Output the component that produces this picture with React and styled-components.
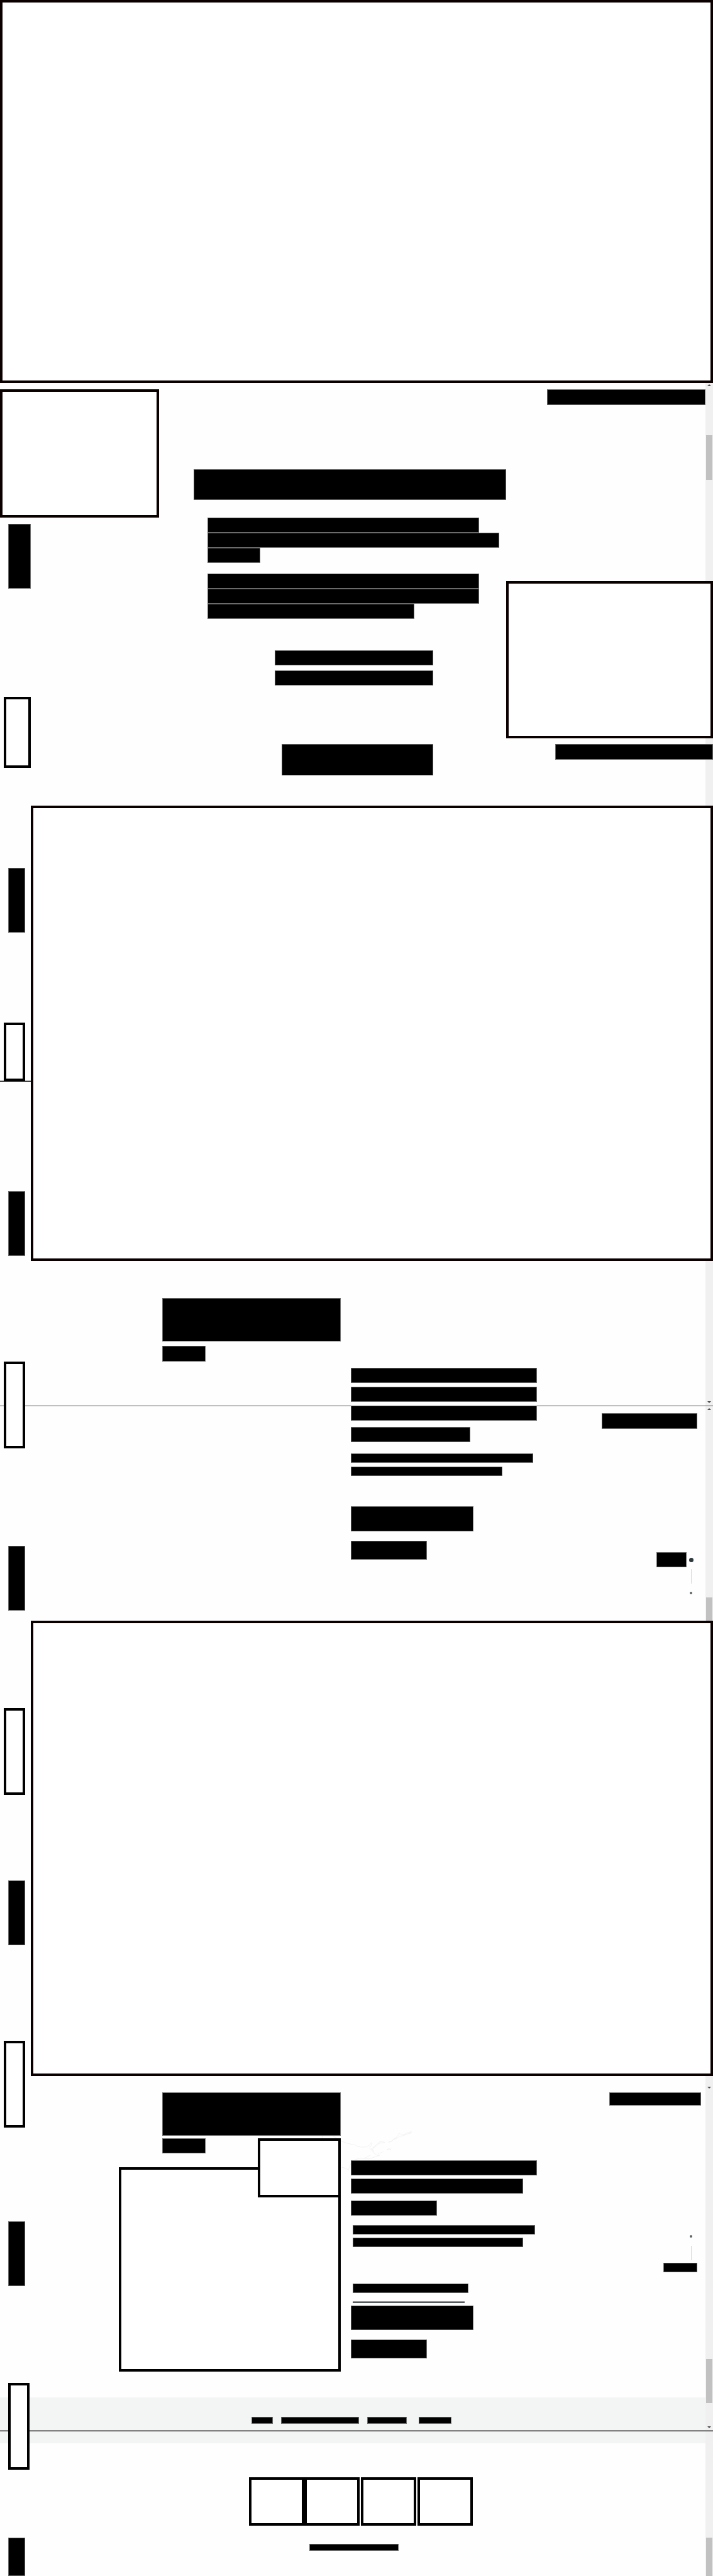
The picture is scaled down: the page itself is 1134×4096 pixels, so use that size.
import React from 'react';
import styled, { createGlobalStyle, css } from 'styled-components';

const GlobalStyle = createGlobalStyle`
  *, *::before, *::after { box-sizing: border-box; }
  html, body { margin: 0; padding: 0; background: #fefefe; }
  body { font-family: "Liberation Sans", Arial, sans-serif; }
`;

const solid = css`
  display: block;
  flex: none;
  margin: 0;
  padding: 0;
  background: #000;
  border: 1px solid #6b6b6b;
`;

const space = css`
  margin-top: ${(p) => p.$gap || 0}px;
`;

const Page = styled.div`
  position: relative;
  overflow: hidden;
`;

/* Scrollbar strip down the right edge, under the page content */
const Track = styled.div`
  position: absolute;
  top: 0;
  right: 0;
  bottom: 0;
  width: 12px;
  background: #f0f0f0;
`;

const Thumb = styled.div`
  position: absolute;
  top: ${(p) => p.$top}px;
  left: 1px;
  right: 1px;
  height: ${(p) => p.$size}px;
  background: #c1c1c1;
`;

const Arrow = styled.div`
  position: absolute;
  top: ${(p) => p.$top}px;
  left: 3px;
  border-left: 3px solid transparent;
  border-right: 3px solid transparent;
  ${(p) => (p.$up ? 'border-bottom' : 'border-top')}: 3px solid #4f4f4f;
`;

const Rule = styled.hr`
  position: absolute;
  top: ${(p) => p.$top}px;
  left: 0;
  right: 0;
  height: ${(p) => (p.$heavy ? 2 : 1)}px;
  margin: 0;
  border: 0;
  background: #444;
  ${(p) => p.$heavy && 'background: #222; border-top: 1px solid #929292;'}
`;

const Content = styled.div`
  position: relative;
`;

/* Positioned so that the page-wide rules pass behind it */
const Panel = styled.div`
  position: relative;
  height: ${(p) => p.$size}px;
  background: #fff;
  border: 4px solid #0b0000;
`;

const Header = styled.header`
  display: flex;
  align-items: flex-start;
  height: 214px;
  padding-top: 10px;
  padding-right: 12px;
`;

const Logo = styled.div`
  flex: none;
  width: 253px;
  height: 204px;
  background: #fff;
  border: 4px solid #0b0000;
`;

const PageTitle = styled.div`
  ${solid}
  width: 497px;
  height: 49px;
  margin: 127px 0 0 55px;
`;

const Tag = styled.div`
  ${solid}
  ${space}
  width: ${(p) => p.$width}px;
  height: ${(p) => p.$size || 25}px;
  margin-left: auto;
  margin-right: ${(p) => p.$inset || 0}px;
`;

const Body = styled.div`
  display: flex;
`;

const Rail = styled.aside`
  position: relative;
  z-index: 1;
  flex: none;
  display: flex;
  flex-direction: column;
  width: 49px;
  padding-top: 10px;
`;

const RailBar = styled.div`
  ${solid}
  ${space}
  width: ${(p) => p.$width || 27}px;
  height: ${(p) => p.$size || 103}px;
  margin-left: 13px;
`;

const RailBox = styled.div`
  ${space}
  flex: none;
  width: ${(p) => p.$width || 34}px;
  height: ${(p) => p.$size || 138}px;
  margin-left: ${(p) => p.$left || 6}px;
  background: #fff;
  border: 4px solid #000;
`;

const Main = styled.main`
  flex: 1;
  min-width: 0;
`;

const Intro = styled.section`
  display: flex;
  height: 458px;
`;

const IntroCopy = styled.div`
  display: flex;
  flex-direction: column;
  width: 475px;
  margin-left: 281px;
`;

const Line = styled.div`
  ${solid}
  ${space}
  width: ${(p) => p.$width}px;
  height: ${(p) => p.$size || 24}px;
  margin-left: ${(p) => p.$indent || 0}px;
`;

const Action = styled.button`
  ${solid}
  ${space}
  width: ${(p) => p.$width}px;
  height: ${(p) => p.$size}px;
  margin-left: ${(p) => p.$indent || 0}px;
  border-radius: 0;
`;

const IntroAside = styled.div`
  flex: 1;
  padding-top: 101px;
`;

const Figure = styled.div`
  height: 250px;
  background: #fff;
  border: 4px solid #0b0000;
`;

const Section = styled.section`
  position: relative;
  display: grid;
  grid-template-columns: 284px 296px 1fr;
  column-gap: 16px;
  align-items: start;
  height: ${(p) => p.$size}px;
  padding-left: 209px;
`;

const Column = styled.div`
  position: relative;
  display: flex;
  flex-direction: column;
  padding-top: ${(p) => p.$top}px;
`;

const Picture = styled.div`
  width: 353px;
  height: 325px;
  margin: 22px 0 0 -69px;
  background: #fff;
  border: 4px solid #000;
`;

const Inset = styled.div`
  position: absolute;
  top: 99px;
  right: 0;
  width: 132px;
  height: 94px;
  background: #fff;
  border: 4px solid #000;
`;

const Underline = styled.div`
  width: 178px;
  height: 3px;
  margin: 13px 0 4px 3px;
  background: #555a5c;
  border-top: 1px solid #999;
`;

const Coast = styled.svg`
  position: absolute;
  top: 70px;
  left: 439px;
  width: 189px;
  height: 95px;
`;

const Step = styled.div`
  ${space}
  display: flex;
  align-items: center;
  justify-content: flex-end;
  gap: 4px;
  padding-right: 31px;
`;

const StepLabel = styled.div`
  ${solid}
  width: 48px;
  height: 24px;
`;

const Dot = styled.span`
  width: ${(p) => p.$size}px;
  height: ${(p) => p.$size}px;
  margin-right: ${(p) => (p.$size < 7 ? 2 : 0)}px;
  border-radius: 50%;
  background: ${(p) => (p.$size < 7 ? '#5b6366' : '#2e383d')};
`;

const Stem = styled.div`
  ${space}
  width: 1px;
  height: 23px;
  margin-left: auto;
  margin-right: 34px;
  background: #d8d8d8;
`;

const FooterBand = styled.nav`
  display: flex;
  align-items: flex-start;
  height: 73px;
  margin: 0 12px 0 -49px;
  padding: 31px 0 0 400px;
  background: #f3f5f4;
`;

const FooterLink = styled.a`
  ${solid}
  width: ${(p) => p.$width}px;
  height: 11px;
  margin-right: ${(p) => p.$after || 13}px;
`;

const Badges = styled.div`
  display: flex;
  gap: 2px;
  padding: 54px 0 0 347px;
`;

const Badge = styled.div`
  width: 88px;
  height: 77px;
  background: #fff;
  border: 4px solid #000;
  &:first-child { margin-right: -2px; }
`;

const Legal = styled.div`
  ${solid}
  width: 142px;
  height: 11px;
  margin: 29px 0 40px 443px;
`;

export default function App() {
  return (
    <Page>
      <GlobalStyle />
      <Track>
        <Arrow $top={611} $up />
        <Thumb $top={692} $size={71} />
        <Arrow $top={2228} />
        <Arrow $top={2239} $up />
        <Thumb $top={2540} $size={60} />
        <Arrow $top={3318} />
        <Thumb $top={3751} $size={70} />
        <Arrow $top={3858} />
        <Thumb $top={4035} $size={61} />
      </Track>
      <Content>
        <Panel $size={609} />
        <Header>
          <Logo />
          <PageTitle />
          <Tag $width={252} />
        </Header>
        <Body>
          <Rule $top={1718} $heavy />
          <Rule $top={2235} />
          <Rail>
            <RailBar $width={36} />
            <RailBox $gap={172} $width={43} $size={113} />
            <RailBar $gap={159} />
            <RailBox $gap={143} $size={93} />
            <RailBar $gap={175} />
            <RailBox $gap={168} />
            <RailBar $gap={155} />
            <RailBox $gap={155} />
            <RailBar $gap={136} />
            <RailBox $gap={152} />
            <RailBar $gap={149} />
            <RailBox $gap={154} $left={13} />
            <RailBar $gap={108} $size={61} />
          </Rail>
          <Main>
            <Intro>
              <IntroCopy>
                <Line $width={432} />
                <Line $width={464} />
                <Line $width={84} />
                <Line $gap={17} $width={432} />
                <Line $width={432} />
                <Line $width={329} />
                <Action aria-label="First option" $gap={50} $indent={107} $width={252} $size={24} />
                <Action aria-label="Second option" $gap={8} $indent={107} $width={252} $size={24} />
                <Action aria-label="Continue" $gap={93} $indent={118} $width={241} $size={50} />
              </IntroCopy>
              <IntroAside>
                <Figure />
                <Tag $gap={9} $width={251} />
              </IntroAside>
            </Intro>

            <Panel $size={724} />

            <Section $size={572}>
              <Column $top={59}>
                <Line $width={284} $size={69} />
                <Line $gap={7} $width={69} $size={25} />
              </Column>
              <Column $top={170}>
                <Line $width={296} />
                <Line $gap={6} $width={296} />
                <Line $gap={6} $width={296} />
                <Line $gap={10} $width={190} />
                <Line $gap={18} $width={290} $size={15} />
                <Line $gap={6} $width={241} $size={15} />
                <Action aria-label="Details" $gap={48} $width={195} $size={40} />
                <Action aria-label="More" $gap={15} $width={121} $size={30} />
              </Column>
              <Column $top={242}>
                <Tag $width={152} $inset={25} />
                <Step $gap={196}>
                  <StepLabel />
                  <Dot $size={7} />
                </Step>
                <Stem $gap={3} />
                <Step $gap={13}>
                  <Dot $size={4} />
                </Step>
              </Column>
            </Section>

            <Panel $size={724} />

            <Section $size={511}>
              <Coast viewBox="0 0 720 360" fill="none" stroke="#efefef" strokeWidth="3" aria-hidden="true">
                <path d="M92 95l4 14M158 96l18 10 28 18 26 11 36 10 30 6 8 8 28 4 31-1 18-13 12-14 3 6-8 15-7 9 4 12 11 8 8 6-5-12 3 12 8 12 13 9 19 0-28 10-18 6-18 5-22 0-33-3-28 8-18 12-12 16-8 20-5 17-20-13-20-4" />
                <path d="M392 171l10-3 6-9 17-12 13-14 19-5 15 8-22 1-18 7-14 14-14 10-5 10-7-2zM496 133l16-5 15-14 14-8 12-15 8-13 12 12 17-4 20-10 24-6-4 9-23 5-22 10-22 3-20 14-18 7-15 12zM484 179l14-6 13 2-7 5zM350 230l23-12 13-5M430 201l10-2M448 196l10-3M464 188l4-1" />
              </Coast>
              <Column $top={26}>
                <Line $width={284} $size={69} />
                <Line $gap={4} $width={69} />
                <Picture />
                <Inset />
              </Column>
              <Column $top={134}>
                <Line $width={296} />
                <Line $gap={5} $width={274} />
                <Line $gap={11} $width={137} />
                <Line $gap={15} $indent={3} $width={290} $size={15} />
                <Line $gap={5} $indent={3} $width={271} $size={15} />
                <Line $gap={58} $indent={3} $width={184} $size={15} />
                <Underline />
                <Action aria-label="Details" $width={195} $size={39} />
                <Action aria-label="More" $gap={15} $width={121} $size={30} />
              </Column>
              <Column $top={26}>
                <Tag $width={146} $size={21} $inset={19} />
                <Step $gap={206}>
                  <Dot $size={4} />
                </Step>
                <Stem $gap={13} />
                <Tag $gap={4} $width={54} $size={15} $inset={25} />
              </Column>
            </Section>

            <FooterBand>
              <FooterLink href="#about" aria-label="About" $width={34} />
              <FooterLink href="#services" aria-label="Services" $width={124} />
              <FooterLink href="#news" aria-label="News" $width={63} $after={19} />
              <FooterLink href="#contact" aria-label="Contact" $width={52} />
            </FooterBand>
            <Badges>
              <Badge />
              <Badge />
              <Badge />
              <Badge />
            </Badges>
            <Legal />
          </Main>
          <Rule $top={3864} $heavy />
        </Body>
      </Content>
    </Page>
  );
}
